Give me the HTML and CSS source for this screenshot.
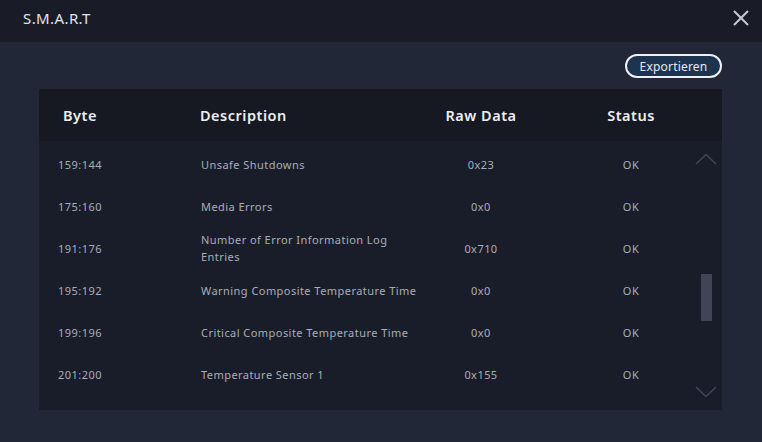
FILE: index.html
```html
<!DOCTYPE html>
<html lang="de">

<head>
    <meta charset="UTF-8">
    <meta name="viewport" content="width=device-width, initial-scale=1.0">
    <title>S.M.A.R.T</title>
    <link rel="stylesheet" href="styles.css">
</head>

<body>
    <div class="dialog">
        <div class="titlebar">
            <span class="title">S.M.A.R.T</span>
            <svg class="close" width="18" height="18" viewBox="0 0 18 18">
                <path d="M2 2 L16 16 M16 2 L2 16" stroke="#c6c9d2" stroke-width="2" fill="none" />
            </svg>
        </div>
        <div class="content">
            <div class="toolbar">
                <button class="export">Exportieren</button>
            </div>
            <div class="panel">
                <div class="row head">
                    <div class="c-byte">Byte</div>
                    <div class="c-desc">Description</div>
                    <div class="c-raw">Raw Data</div>
                    <div class="c-status">Status</div>
                </div>
                <div class="list">
                    <div class="row">
                        <div class="c-byte">159:144</div>
                        <div class="c-desc">Unsafe Shutdowns</div>
                        <div class="c-raw">0x23</div>
                        <div class="c-status">OK</div>
                    </div>
                    <div class="row">
                        <div class="c-byte">175:160</div>
                        <div class="c-desc">Media Errors</div>
                        <div class="c-raw">0x0</div>
                        <div class="c-status">OK</div>
                    </div>
                    <div class="row">
                        <div class="c-byte">191:176</div>
                        <div class="c-desc">Number of Error Information Log Entries</div>
                        <div class="c-raw">0x710</div>
                        <div class="c-status">OK</div>
                    </div>
                    <div class="row">
                        <div class="c-byte">195:192</div>
                        <div class="c-desc">Warning Composite Temperature Time</div>
                        <div class="c-raw">0x0</div>
                        <div class="c-status">OK</div>
                    </div>
                    <div class="row">
                        <div class="c-byte">199:196</div>
                        <div class="c-desc">Critical Composite Temperature Time</div>
                        <div class="c-raw">0x0</div>
                        <div class="c-status">OK</div>
                    </div>
                    <div class="row">
                        <div class="c-byte">201:200</div>
                        <div class="c-desc">Temperature Sensor 1</div>
                        <div class="c-raw">0x155</div>
                        <div class="c-status">OK</div>
                    </div>

                    <div class="scroll">
                        <svg class="arrow up" width="22" height="12" viewBox="0 0 22 12">
                            <path d="M1 11 L11 1.5 L21 11" stroke="#404556" stroke-width="1.6" fill="none" />
                        </svg>
                        <div class="track">
                            <div class="thumb"></div>
                        </div>
                        <svg class="arrow down" width="22" height="12" viewBox="0 0 22 12">
                            <path d="M1 1 L11 10.5 L21 1" stroke="#404556" stroke-width="1.6" fill="none" />
                        </svg>
                    </div>
                </div>
            </div>
        </div>
    </div>
</body>

</html>
```

FILE: styles.css
```css
* {
    margin: 0;
    padding: 0;
    box-sizing: border-box;
}

html,
body {
    height: 100%;
}

body {
    background-color: #222738;
    font-family: "Noto Sans", "Open Sans", sans-serif;
    color: #a9adb8;
}

.dialog {
    height: 100%;
    display: flex;
    flex-direction: column;
}

.titlebar {
    height: 42px;
    background-color: #191c27;
    display: flex;
    align-items: center;
    justify-content: space-between;
    padding: 0 12px 6px 23px;
}

.title {
    font-size: 15px;
    letter-spacing: 0.4px;
    color: #e2e4ea;
}

.content {
    padding: 12px 40px 32px 39px;
    flex: 1;
    display: flex;
    flex-direction: column;
}

.toolbar {
    display: flex;
    justify-content: flex-end;
    margin-bottom: 11px;
}

.export {
    width: 97px;
    height: 24px;
    border: 2px solid #eef0f4;
    border-radius: 12px;
    background-color: #1d3450;
    color: #e6e8ee;
    font-family: inherit;
    font-size: 12px;
    letter-spacing: 0.2px;
}

.panel {
    flex: 1;
    background-color: #191d2a;
    display: flex;
    flex-direction: column;
}

.row {
    display: grid;
    grid-template-columns: 82px 300px 120px 180px;
    align-items: center;
    height: 42px;
    font-size: 11px;
    letter-spacing: 0.45px;
}

.row.head {
    height: 52px;
    background-color: #161921;
    font-size: 14.5px;
    font-weight: 600;
    color: #eceef2;
    letter-spacing: 0.5px;
}

.c-byte,
.c-raw,
.c-status {
    text-align: center;
}

.c-desc {
    padding-left: 80px;
    line-height: 17px;
}

.head .c-desc {
    padding-left: 79px;
}

.list {
    position: relative;
    flex: 1;
    padding-top: 2px;
    overflow: hidden;
}

/* scroll bar sits over the right edge of the list */
.scroll {
    position: absolute;
    top: 12px;
    right: 5px;
    bottom: 12px;
    width: 22px;
    display: flex;
    flex-direction: column;
    align-items: center;
}

.track {
    flex: 1;
    width: 11px;
    position: relative;
}

.thumb {
    position: absolute;
    top: 109px;
    left: 0;
    width: 11px;
    height: 47px;
    background-color: #3f4456;
}
```
